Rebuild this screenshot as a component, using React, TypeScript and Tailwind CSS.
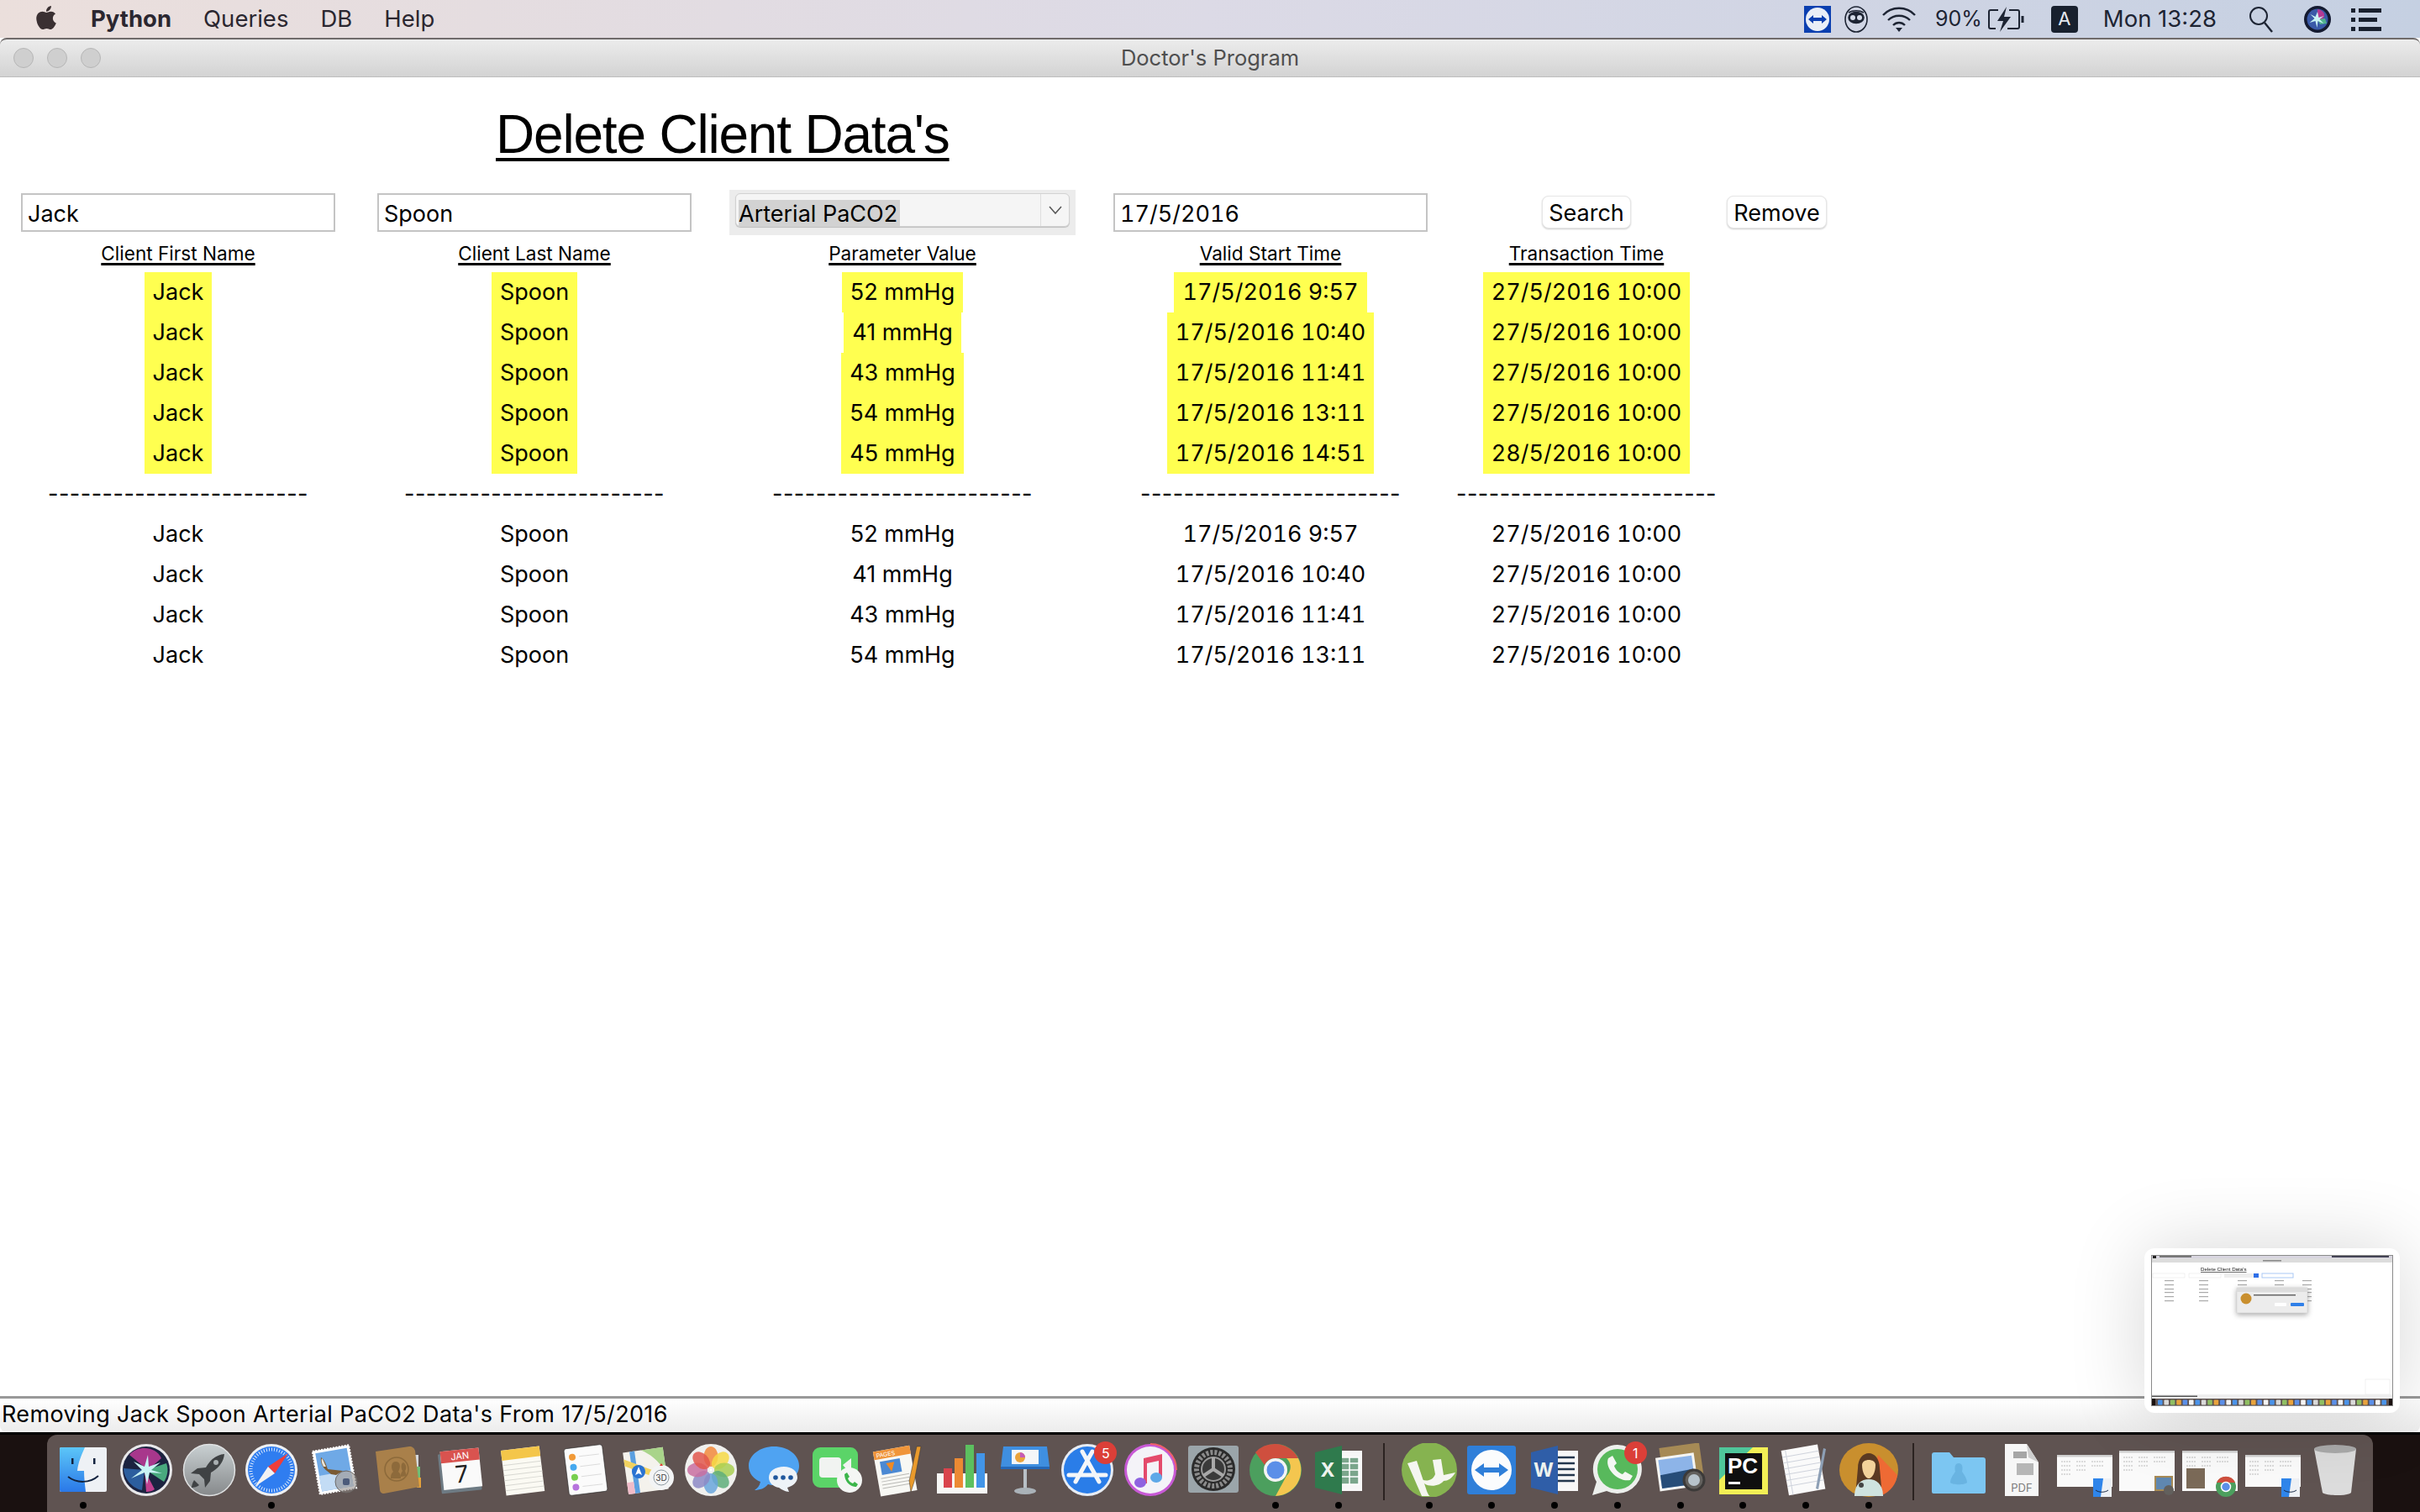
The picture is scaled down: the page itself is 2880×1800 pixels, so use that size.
import type { ReactNode } from "react";
import { FaApple } from "react-icons/fa";

const UI = "[font-family:Inter,'Noto_Sans',sans-serif]";
const ARIAL = "[font-family:'Liberation_Sans',Arial,sans-serif]";
const DATE = "tabular-nums";

const FIRST = ["Jack", "Jack", "Jack", "Jack", "Jack"];
const LAST = ["Spoon", "Spoon", "Spoon", "Spoon", "Spoon"];
const VALUES = ["52 mmHg", "41 mmHg", "43 mmHg", "54 mmHg", "45 mmHg"];
const STARTS = ["17/5/2016 9:57", "17/5/2016 10:40", "17/5/2016 11:41", "17/5/2016 13:11", "17/5/2016 14:51"];
const TX = ["27/5/2016 10:00", "27/5/2016 10:00", "27/5/2016 10:00", "27/5/2016 10:00", "28/5/2016 10:00"];

const INPUT =
  "w-full h-[46px] px-[6px] pt-[2px] text-[27px] text-black bg-white border-2 border-[#c4c4c4] outline-none";
const BUTTON =
  "h-[39px] -mt-[2px] px-[7px] text-[27px] text-black bg-white rounded-lg border border-[#e6e6e6] shadow-[0_1px_2px_rgba(0,0,0,0.2)]";

// ── Table column ──────────────────────────────────────────────────────────────

function Column({
  className,
  control,
  label,
  rows,
  date,
}: {
  className: string;
  control: ReactNode;
  label: string;
  rows: string[];
  date?: boolean;
}) {
  return (
    <div className={`flex flex-col items-center ${className}`}>
      <div className="h-[54px] w-full flex items-center justify-center">{control}</div>
      <div className="h-[44px] flex items-center text-[22.6px] underline decoration-[3px] underline-offset-[3px]">
        {label}
      </div>
      {rows.map((r, i) => (
        <div key={i} className={`h-[48px] leading-[48px] px-[10px] bg-[#ffff50] whitespace-nowrap ${date ? DATE : ""}`}>
          {r}
        </div>
      ))}
      <div className="h-[48px] leading-[48px] tracking-[0.5px] whitespace-nowrap">------------------------</div>
      {rows.slice(0, 4).map((r, i) => (
        <div key={i} className={`h-[48px] leading-[48px] whitespace-nowrap ${date ? DATE : ""}`}>
          {r}
        </div>
      ))}
    </div>
  );
}

// ── Menu bar ──────────────────────────────────────────────────────────────────

function MenuBar() {
  return (
    <div className={`h-[45px] shrink-0 flex items-center justify-between text-[27.5px] text-[#2b2730] bg-gradient-to-r from-[#ebdfdc] via-[#dcdae6] to-[#c5d0e2] ${UI}`}>
      <div className="flex items-center pl-[40px]">
        <FaApple className="w-[30px] h-[32px] text-[#3a3032] -mt-[4px]" />
        <span className="ml-[38px] font-bold">Python</span>
        <span className="ml-[38px]">Queries</span>
        <span className="ml-[38px]">DB</span>
        <span className="ml-[38px]">Help</span>
      </div>
      <div className="flex items-center pr-[46px] text-[#1d2433]">
        <svg width="32" height="32" viewBox="0 0 32 32">
          <rect width="32" height="32" fill="#0b3fb0" />
          <ellipse cx="16" cy="16" rx="14" ry="14" fill="#e9eef7" />
          <path d="M5 16l6-5v3h10v-3l6 5-6 5v-3H11v3z" fill="#0b3fb0" />
        </svg>
        <svg className="ml-[16px]" width="28" height="32" viewBox="0 0 28 32" fill="none" stroke="#1d2433" strokeWidth="1.6">
          <ellipse cx="14" cy="16" rx="13" ry="15" />
          <path d="M5 8c5-3 13-3 18 0" />
          <ellipse cx="14" cy="14" rx="9" ry="6.5" fill="#1d2433" />
          <circle cx="10" cy="14" r="3" fill="#d5dbe8" stroke="none" />
          <circle cx="18" cy="14" r="3" fill="#d5dbe8" stroke="none" />
        </svg>
        <svg className="ml-[16px]" width="42" height="32" viewBox="0 0 42 32" fill="none" stroke="#1d2433" strokeWidth="2.4">
          <path d="M2 11C12 0 30 0 40 11" />
          <path d="M8 17c7-7 19-7 26 0" />
          <path d="M14 23c4-4 10-4 14 0" />
          <path d="M17 26h8l-4 5z" fill="#1d2433" stroke="none" />
        </svg>
        <span className="ml-[22px] text-[25px]">90%</span>
        <svg className="ml-[6px]" width="46" height="32" viewBox="0 0 46 32" fill="none" stroke="#1d2433" strokeWidth="2">
          <path d="M13 5H4a2 2 0 0 0-2 2v18a2 2 0 0 0 2 2h6M26 5h10a2 2 0 0 1 2 2v18a2 2 0 0 1-2 2H24" />
          <path d="M42 12v8" strokeWidth="3" />
          <path d="M23 1L12 18h7l-4 13 13-18h-8z" fill="#1d2433" stroke="none" />
        </svg>
        <span className="ml-[30px] w-[32px] h-[32px] rounded-[4px] bg-[#18202e] text-[#e6e9f0] text-[22px] flex items-center justify-center">
          A
        </span>
        <span className="ml-[30px]">Mon 13:28</span>
        <svg className="ml-[38px]" width="30" height="32" viewBox="0 0 30 32" fill="none" stroke="#1d2433" strokeWidth="2">
          <circle cx="12" cy="12" r="10" />
          <path d="M19 20l9 11" strokeWidth="2.4" />
        </svg>
        <svg className="ml-[36px]" width="32" height="32" viewBox="0 0 32 32">
          <circle cx="16" cy="16" r="16" fill="#141a30" />
          <circle cx="16" cy="16" r="12.5" fill="#3a5aa8" />
          <path d="M16 4c7 1 11 7 6 12h-6z" fill="#b43a94" />
          <path d="M16 16l9-1 2 6-8 1z" fill="#4fb28c" />
          <path d="M16 7l1.5 7 6-2-5 4 5 5-7-3-1 8-2-8-7 2 6-5-5-5 6 3z" fill="#c9f3f4" />
        </svg>
        <svg className="ml-[24px]" width="36" height="28" viewBox="0 0 36 28" fill="#18202e">
          <rect y="1" width="5" height="5" />
          <rect x="9" y="1" width="27" height="5" />
          <rect y="12" width="5" height="5" />
          <rect x="9" y="12" width="22" height="5" />
          <rect y="23" width="5" height="5" />
          <rect x="9" y="23" width="27" height="5" />
        </svg>
      </div>
    </div>
  );
}

// ── Dock icons ────────────────────────────────────────────────────────────────

function Ico({ children, w = 64 }: { children: ReactNode; w?: number }) {
  return (
    <svg width={w} height="64" viewBox={`0 0 ${w} 64`}>
      {children}
    </svg>
  );
}

const Finder = () => (
  <Ico>
    <defs>
      <linearGradient id="fb" x1="0" y1="0" x2="0" y2="1">
        <stop offset="0" stopColor="#5cc6f8" />
        <stop offset="1" stopColor="#2a78e8" />
      </linearGradient>
    </defs>
    <rect x="4" y="5" width="56" height="53" rx="2" fill="#eef1f5" />
    <path d="M6 5h28c-4 9-8 18-9 28h8c0 8 1 16 2 25H6a2 2 0 0 1-2-2V7a2 2 0 0 1 2-2z" fill="url(#fb)" />
    <rect x="18" y="18" width="2.5" height="7" fill="#12233f" />
    <rect x="44" y="18" width="2.5" height="7" fill="#12233f" />
    <path d="M14 40c10 8 26 8 36-1" fill="none" stroke="#12233f" strokeWidth="2" />
  </Ico>
);

const Siri = () => (
  <Ico>
    <circle cx="32" cy="32" r="31" fill="#e8e8ea" />
    <circle cx="32" cy="32" r="28" fill="#1c2340" />
    <path d="M12 14C22 2 44 4 50 18L34 32z" fill="#a8378c" />
    <path d="M5 30c1 14 11 24 22 26l3-24z" fill="#2c5e9e" />
    <path d="M32 32l24-8c3 8 1 16-3 22z" fill="#49a97e" />
    <path d="M30 32l2 26c4 0 8-1 10-3z" fill="#c0408f" />
    <path d="M34 14l1 14 14-5-11 9 13 4-15-1-3 14-3-14-16 7 13-10-10-10 13 6z" fill="#c9f3f4" />
  </Ico>
);

const Launchpad = () => (
  <Ico>
    <defs>
      <linearGradient id="lp" x1="0" y1="0" x2="0" y2="1">
        <stop offset="0" stopColor="#c9d0d2" />
        <stop offset="1" stopColor="#86898b" />
      </linearGradient>
    </defs>
    <circle cx="32" cy="32" r="30.5" fill="url(#lp)" stroke="#dfe1e2" strokeWidth="1.5" />
    <path d="M50 13c-10 1-17 7-22 16l-10 1-8 6 10 1 6 6 1 10 6-8 1-10c9-5 15-12 16-22z" fill="#3f4244" />
    <circle cx="40" cy="23" r="3" fill="#a9afb1" />
    <path d="M14 44c-2 3-3 7-3 9 3 0 7-1 9-3z" fill="#3f4244" />
  </Ico>
);

const Safari = () => (
  <Ico>
    <circle cx="32" cy="32" r="31" fill="#eef0f2" />
    <circle cx="32" cy="32" r="28" fill="#2f7df0" />
    <circle cx="32" cy="32" r="24.5" fill="none" stroke="#dbe9fb" strokeWidth="4" strokeDasharray="1 2.1" />
    <path d="M52 12L36 36l-8-8z" fill="#ef3e3a" />
    <path d="M12 52l16-24 8 8z" fill="#f2f2f2" />
  </Ico>
);

const Mail = () => (
  <Ico>
    <g transform="rotate(-10 30 32)">
      <rect x="10" y="6" width="44" height="52" fill="#fff" stroke="#fff" strokeWidth="2" strokeDasharray="2 1.5" />
      <rect x="13" y="9" width="38" height="46" fill="#6fa9e6" />
      <rect x="13" y="36" width="38" height="19" fill="#c3dcf5" />
    </g>
    <path d="M16 17c4 2 6 8 8 14l18 2-8 5-6-1-5-4c-5-4-8-10-7-16z" fill="#7a5a33" />
    <path d="M17 18c2 2 3 6 5 10l-3 0c-2-3-3-7-2-10z" fill="#e9e3d6" />
    <circle cx="46" cy="46" r="13" fill="#8a8582" fillOpacity="0.55" stroke="#6e6a68" />
    <rect x="42" y="42" width="8" height="8" rx="2" fill="#4c5b7a" />
  </Ico>
);

const Contacts = () => (
  <Ico>
    <rect x="52" y="14" width="5" height="14" fill="#d4d8dc" />
    <rect x="54" y="28" width="5" height="13" fill="#6fbf76" />
    <rect x="55" y="41" width="5" height="12" fill="#e4a23b" />
    <path d="M6 10L46 4c4 0 6 2 7 5l5 43-42 8c-3 0-5-2-5-5z" fill="#a9804a" />
    <circle cx="31" cy="31" r="14" fill="none" stroke="#8d6a3b" strokeWidth="1.6" />
    <path d="M24 42c0-5 1-6 3-8-3-4-3-12 3-12s6 7 3 12c2 2 3 3 3 8z" fill="#8d6a3b" />
    <path d="M36 40c0-5 1-5 2-7-2-3-2-9 1-10 4 2 4 8 2 10l2 6z" fill="#8d6a3b" />
  </Ico>
);

const Calendar = () => (
  <Ico>
    <g transform="rotate(-6 32 32)">
      <rect x="8" y="11" width="48" height="47" rx="1" fill="#6e7b84" />
      <rect x="11" y="8" width="46" height="46" fill="#fafafa" />
      <rect x="11" y="8" width="46" height="14" fill="#d9534f" />
      <text x="34" y="19.5" textAnchor="middle" fontSize="11" fill="#fff" fontFamily="Inter">JAN</text>
      <text x="34" y="47" textAnchor="middle" fontSize="28" fill="#222" fontFamily="Inter">7</text>
    </g>
  </Ico>
);

const Notes = () => (
  <Ico>
    <g transform="rotate(-7 32 32)">
      <rect x="9" y="6" width="46" height="54" fill="#fbfaf3" />
      <rect x="9" y="6" width="46" height="12" fill="#f4c64a" />
      <path d="M9 24h46M9 30h46M9 36h46M9 42h46M9 48h46M9 54h46" stroke="#d8d8d2" />
    </g>
  </Ico>
);

const Reminders = () => (
  <Ico>
    <g transform="rotate(-7 32 32)">
      <rect x="9" y="4" width="46" height="56" rx="3" fill="#fbfbfb" stroke="#262626" strokeWidth="0.6" />
      <circle cx="18" cy="15" r="4" fill="#f19a38" />
      <circle cx="18" cy="27" r="4" fill="#46a9ef" />
      <circle cx="18" cy="39" r="4" fill="#77cf4f" />
      <circle cx="18" cy="51" r="4" fill="#b673dd" />
      <path d="M26 15h24M26 27h24M26 39h24M26 51h24" stroke="#dcdcdc" />
    </g>
  </Ico>
);

const Maps = () => (
  <Ico>
    <g transform="rotate(-8 28 30)">
      <rect x="4" y="8" width="48" height="50" fill="#f4f2ec" />
      <path d="M26 8h26v30C44 22 36 14 26 8z" fill="#a9d48a" />
      <path d="M12 8h6v50h-6z" fill="#5b9fe0" />
      <path d="M4 24l48 26v-8L4 16z" fill="#f2d25f" />
      <rect x="4" y="44" width="8" height="14" fill="#f1bcc9" />
    </g>
    <circle cx="20" cy="34" r="8" fill="#2a73d2" />
    <path d="M20 28l4 10-4-2-4 2z" fill="#fff" />
    <circle cx="47" cy="41" r="15" fill="#f3f4f5" />
    <circle cx="47" cy="41" r="9" fill="none" stroke="#8e9aa2" />
    <text x="47" y="45" textAnchor="middle" fontSize="10" fill="#444" fontFamily="Inter">3D</text>
    <path d="M47 24l2 3h-4z" fill="#e23b32" />
  </Ico>
);

const PETALS = ["#f28a3c", "#f6d945", "#a9cf52", "#5fae7a", "#6aa6dc", "#8d8ac6", "#c96fa0", "#e2574c"];

const Photos = () => (
  <Ico>
    <circle cx="32" cy="32" r="31" fill="#f0f0ee" />
    {PETALS.map((c, i) => (
      <ellipse key={c} cx="32" cy="16" rx="8.5" ry="12" fill={c} fillOpacity="0.85" transform={`rotate(${i * 45} 32 32)`} />
    ))}
    <circle cx="32" cy="32" r="1.5" fill="#fff" />
  </Ico>
);

const Messages = () => (
  <Ico>
    <path d="M32 4C16 4 2 14 2 27c0 9 6 16 14 19-1 5-4 8-7 10 6 0 12-2 16-7 3 1 5 1 7 1 17 0 30-10 30-23S49 4 32 4z" fill="#4fa3f2" />
    <path d="M44 28c-10 0-18 5-18 13 0 6 5 11 12 12 3 2 8 5 12 5l-2-5c7-2 12-7 12-12 0-8-7-13-16-13z" fill="#eef3f8" />
    <circle cx="34" cy="41" r="2.8" fill="#1f579d" />
    <circle cx="43" cy="41" r="2.8" fill="#1f579d" />
    <circle cx="52" cy="41" r="2.8" fill="#1f579d" />
  </Ico>
);

const FaceTime = () => (
  <Ico>
    <rect x="3" y="5" width="54" height="48" rx="9" fill="#5bd468" />
    <rect x="11" y="17" width="26" height="24" rx="4" fill="#f1f3f1" />
    <path d="M39 26l10-8v20z" fill="#f1f3f1" />
    <circle cx="47" cy="44" r="15" fill="#f4f6f4" />
    <path d="M41 37l3-2 3 5-2 2c1 3 3 5 6 6l2-2 4 3-2 3c-8 0-14-7-14-15z" fill="#3cb64b" />
  </Ico>
);

const Pages = () => (
  <Ico>
    <g transform="rotate(-10 28 32)">
      <rect x="5" y="6" width="44" height="54" fill="#f8f8f4" />
      <rect x="5" y="6" width="44" height="10" fill="#f0953a" />
      <text x="8" y="14" fontSize="7" fill="#fff" fontFamily="Inter">PAGES</text>
      <rect x="11" y="19" width="24" height="16" fill="#4b89d3" />
      <path d="M18 22h10l-5 11z" fill="#f08a24" />
      <path d="M9 39h34M9 43h34M9 47h34M9 51h34" stroke="#b9b9b5" />
    </g>
    <path d="M58 4l-8 42-4 12-2-13 9-41z" fill="#e99a2c" stroke="#333" strokeWidth="0.5" />
  </Ico>
);

const Numbers = () => (
  <Ico>
    <rect x="2" y="36" width="60" height="24" fill="#f7f7f5" />
    <rect x="10" y="30" width="10" height="23" fill="#d9434c" />
    <rect x="23" y="18" width="10" height="35" fill="#ec8a33" />
    <rect x="36" y="2" width="10" height="51" fill="#5cc05f" />
    <rect x="49" y="12" width="10" height="41" fill="#4295e8" />
  </Ico>
);

const Keynote = () => (
  <Ico>
    <path d="M6 4h52l3 24H3z" fill="#3f8fe0" />
    <rect x="16" y="8" width="32" height="17" fill="#f4f6f8" />
    <circle cx="26" cy="17" r="6" fill="#e9a33c" />
    <path d="M26 17V11a6 6 0 0 1 6 6z" fill="#c65bb8" />
    <rect x="3" y="28" width="58" height="3" fill="#2568b8" />
    <rect x="30" y="31" width="4" height="24" fill="#b8c0c6" />
    <ellipse cx="32" cy="57" rx="13" ry="4" fill="#aab2b8" />
  </Ico>
);

const AppStore = () => (
  <Ico>
    <circle cx="32" cy="32" r="31" fill="#e7ecf3" />
    <circle cx="32" cy="32" r="28" fill="#2a7de8" />
    <path d="M38 10L18 46M26 10l20 36M10 38h44" stroke="#f4f6f9" strokeWidth="5" strokeLinecap="round" />
  </Ico>
);

const Music = () => (
  <Ico>
    <circle cx="32" cy="32" r="31" fill="#c85ad6" />
    <path d="M32 1a31 31 0 0 1 31 31" fill="none" stroke="#ef5f6a" strokeWidth="2" />
    <circle cx="32" cy="32" r="28" fill="#f4f3f8" />
    <path d="M24 18l22-5v28h-4V21l-14 3v24h-4z" fill="#e44a6b" />
    <ellipse cx="20" cy="47" rx="7" ry="6" fill="#8f63e0" />
    <ellipse cx="39" cy="41" rx="7" ry="6" fill="#5ea8e8" />
  </Ico>
);

const SysPrefs = () => (
  <Ico>
    <rect x="2" y="3" width="60" height="56" rx="3" fill="#9ba5aa" />
    <circle cx="32" cy="31" r="26" fill="#2b2b2b" />
    <circle cx="32" cy="31" r="20" fill="none" stroke="#8b8b8b" strokeWidth="6" strokeDasharray="3 2" />
    <circle cx="32" cy="31" r="14" fill="#3a3a3a" stroke="#999" strokeWidth="2" />
    <path d="M32 31V17M32 31L20 39M32 31l12 8" stroke="#a8a8a8" strokeWidth="4" />
  </Ico>
);

const Chrome = () => (
  <Ico>
    <circle cx="32" cy="32" r="31" fill="#4c9f5e" />
    <path d="M32 1a31 31 0 0 1 27 17H32a14 14 0 0 0-13 8L8 11A31 31 0 0 1 32 1z" fill="#cf4f3e" />
    <path d="M59 18a31 31 0 0 1-27 45l13-24a14 14 0 0 0 0-21z" fill="#f4c64f" />
    <circle cx="32" cy="32" r="14" fill="#f4f4f4" />
    <circle cx="32" cy="32" r="10.5" fill="#5b8fe8" />
  </Ico>
);

const Office = ({ color, letter, word }: { color: string; letter: string; word?: boolean }) => (
  <Ico>
    <rect x="24" y="9" width="36" height="48" fill="#f7f7f7" />
    {word ? (
      <path d="M34 17h22M34 24h22M34 31h22M34 38h22M34 45h22" stroke="#23364d" strokeWidth="2.5" />
    ) : (
      <path d="M34 17h22v32H34zM34 24h22M34 32h22M34 40h22M45 17v32" fill="#7ba68c" stroke="#fff" strokeWidth="1.5" />
    )}
    <path d="M4 11L36 3v58L4 53z" fill={color} />
    <text x="19" y="40" textAnchor="middle" fontSize="23" fontWeight="700" fill="#eef3ee" fontFamily="Inter">{letter}</text>
  </Ico>
);

const UTorrent = () => (
  <Ico w={68}>
    <circle cx="34" cy="32" r="33" fill="#86b350" />
    <path d="M8 24l11-3 11 33c1 3 3 9 5 9h-10L8 24z" fill="#f5f6f1" />
    <path d="M22 40c4 7 16 6 19-3l-3-17 10-1 3 19 14-3c-4 7-9 10-14 10-5 7-24 10-29-5z" fill="#f5f6f1" />
  </Ico>
);

const TeamViewer = () => (
  <Ico>
    <rect x="3" y="3" width="58" height="58" rx="3" fill="#2f7fd9" />
    <circle cx="32" cy="32" r="24" fill="#fbfcfd" />
    <path d="M12 32l11-8v5h18v-5l11 8-11 8v-5H23v5z" fill="#2f7fd9" />
  </Ico>
);

const WhatsApp = () => (
  <Ico>
    <path d="M32 2a29 29 0 0 0-25 44L2 62l17-5A29 29 0 1 0 32 2z" fill="#ecefec" />
    <circle cx="32" cy="31" r="24" fill="#58b95c" />
    <path d="M21 18l5-3 5 9-3 3c1 4 6 9 10 10l3-3 9 5-3 5c-14 3-31-14-26-26z" fill="#f4f7f3" />
  </Ico>
);

const Preview = () => (
  <Ico>
    <g transform="rotate(-8 30 30)">
      <rect x="10" y="3" width="48" height="44" fill="#a68a55" />
      <rect x="4" y="14" width="46" height="40" fill="#f5f5f2" />
      <rect x="7" y="17" width="40" height="34" fill="#8db4e8" />
      <path d="M7 35l40-2v18H7z" fill="#274d78" />
    </g>
    <circle cx="48" cy="44" r="12" fill="#62605d" stroke="#3c3a39" strokeWidth="3" />
    <circle cx="48" cy="44" r="7" fill="#b7c3cb" />
  </Ico>
);

const PyCharm = () => (
  <Ico>
    <rect x="4" y="5" width="58" height="56" fill="#f2ef55" />
    <path d="M4 5h40L20 28 4 44z" fill="#4fc69a" />
    <rect x="11" y="12" width="44" height="43" fill="#0f0f0f" />
    <text x="14" y="36" fontSize="26" fontWeight="700" fill="#fff" fontFamily="'Liberation Sans'">PC</text>
    <rect x="15" y="46" width="14" height="3" fill="#fff" />
  </Ico>
);

const TextEdit = () => (
  <Ico>
    <g transform="rotate(-10 28 32)">
      <rect x="7" y="5" width="44" height="54" fill="#fafafa" />
      <path d="M7 13h44M7 20h44M7 27h44M7 34h44M7 41h44M7 48h44M12 5v54" stroke="#cfd3dc" />
    </g>
    <path d="M53 6l-9 48 3 1 9-48z" fill="#8d9fb5" />
  </Ico>
);

const Doctor = () => (
  <Ico w={70}>
    <ellipse cx="35" cy="32" rx="35" ry="32" fill="#c98f2e" />
    <path d="M46 14l23 24a35 32 0 0 1-18 24H36z" fill="#ee6a34" />
    <path d="M22 30c0-24 26-24 26 0l2 22H20z" fill="#5b3a22" />
    <path d="M27 26c0-8 16-8 16 0 0 9-4 16-8 16s-8-7-8-16z" fill="#f4d39b" />
    <path d="M18 63c0-14 8-20 17-20s17 6 17 20z" fill="#cfe3df" />
    <circle cx="26" cy="50" r="3" fill="#444" />
  </Ico>
);

const Folder = () => (
  <Ico w={66}>
    <path d="M1 14a3 3 0 0 1 3-3h18l5 6h35a3 3 0 0 1 3 3v38a2 2 0 0 1-2 2H3a2 2 0 0 1-2-2z" fill="#7cc6f2" />
    <path d="M33 24c-5 0-5 6-4 10-3 4-6 9-6 13 3 3 17 3 20 0 0-4-3-9-6-13 1-4 1-10-4-10z" fill="#69b4e2" />
  </Ico>
);

const Pdf = () => (
  <Ico>
    <path d="M12 1h26l14 22v40H12z" fill="#f6f6f6" />
    <path d="M38 1l14 22-12-6z" fill="#cfcfcf" />
    <rect x="22" y="10" width="16" height="8" fill="#a6a6a6" />
    <rect x="26" y="24" width="20" height="14" fill="#b6b6b6" />
    <text x="32" y="58" textAnchor="middle" fontSize="13" fill="#7b7b7b" fontFamily="Inter">PDF</text>
  </Ico>
);

const Thumb = ({ kind }: { kind: "finder" | "doc" | "chrome" }) => {
  const top = kind === "finder" ? 14 : 9;
  const h = kind === "finder" ? 38 : 48;
  return (
    <Ico w={68}>
      <rect x="1" y={top} width="66" height={h} fill="#fafafa" />
      <rect x="1" y={top} width="66" height="2.5" fill="#cfcfcf" />
      <path
        d={`M6 ${top + 8}h12M6 ${top + 13}h12M6 ${top + 18}h12M6 ${top + 23}h12M24 ${top + 8}h12M24 ${top + 13}h12M24 ${top + 18}h12M42 ${top + 8}h14M42 ${top + 13}h14`}
        stroke="#bcbcbc"
        strokeDasharray="2 1"
      />
      {kind === "chrome" && (
        <>
          <rect x="6" y="30" width="22" height="24" fill="#7b6a58" />
          <circle cx="53" cy="52" r="12" fill="#4c9f5e" />
          <path d="M42 47a12 12 0 0 1 22 0z" fill="#cf4f3e" />
          <circle cx="53" cy="52" r="5.5" fill="#5b8fe8" stroke="#fff" strokeWidth="1.5" />
        </>
      )}
      {kind === "finder" && (
        <>
          <rect x="44" y="42" width="22" height="22" fill="#eef1f5" />
          <path d="M44 42h12l-3 22h-9z" fill="#2f85ea" />
          <path d="M47 56c4 3 11 3 15 0" fill="none" stroke="#12233f" />
        </>
      )}
      {kind === "doc" && (
        <>
          <rect x="44" y="40" width="20" height="16" fill="#5f87b0" stroke="#a68a55" strokeWidth="2" />
          <circle cx="60" cy="56" r="6" fill="#62605d" />
        </>
      )}
    </Ico>
  );
};

const Trash = () => (
  <Ico>
    <path d="M7 7c8-5 42-5 50 0l-6 52c-4 4-30 4-34 0z" fill="#dcdcdc" />
    <ellipse cx="32" cy="7" rx="25" ry="5" fill="#a9a9a9" />
  </Ico>
);

const Badge = ({ n }: { n: number }) => (
  <span className="absolute -top-[2px] right-[-3px] w-[27px] h-[27px] rounded-full bg-[#db3f38] text-white text-[16px] flex items-center justify-center">
    {n}
  </span>
);

function Slot({ children, dot, badge }: { children: ReactNode; dot?: boolean; badge?: number }) {
  return (
    <div className="relative w-[74.7px] shrink-0 flex flex-col items-center">
      <div className="relative h-[64px] flex items-center justify-center">
        {children}
        {badge !== undefined && <Badge n={badge} />}
      </div>
      {dot && <div className="mt-[6px] w-[8px] h-[8px] rounded-full bg-black" />}
    </div>
  );
}

const Sep = () => (
  <div className="w-[33px] shrink-0 flex justify-center">
    <div className="w-[2px] h-[68px] bg-[#2b2220]" />
  </div>
);

function Dock() {
  return (
    <div className={`h-[95px] shrink-0 border-t-[3px] border-black bg-[#1a1110] pl-[56px] pr-[56px] ${UI}`}>
      <div className="h-full rounded-t-xl bg-[#5f5351] flex pt-[10px] pl-[6px]">
        <Slot dot><Finder /></Slot>
        <Slot><Siri /></Slot>
        <Slot><Launchpad /></Slot>
        <Slot dot><Safari /></Slot>
        <Slot><Mail /></Slot>
        <Slot><Contacts /></Slot>
        <Slot><Calendar /></Slot>
        <Slot><Notes /></Slot>
        <Slot><Reminders /></Slot>
        <Slot><Maps /></Slot>
        <Slot><Photos /></Slot>
        <Slot><Messages /></Slot>
        <Slot><FaceTime /></Slot>
        <Slot><Pages /></Slot>
        <Slot><Numbers /></Slot>
        <Slot><Keynote /></Slot>
        <Slot badge={5}><AppStore /></Slot>
        <Slot><Music /></Slot>
        <Slot><SysPrefs /></Slot>
        <Slot dot><Chrome /></Slot>
        <Slot dot><Office color="#2f7a4d" letter="X" /></Slot>
        <Sep />
        <Slot dot><UTorrent /></Slot>
        <Slot dot><TeamViewer /></Slot>
        <Slot dot><Office color="#2f5ea8" letter="W" word /></Slot>
        <Slot dot badge={1}><WhatsApp /></Slot>
        <Slot dot><Preview /></Slot>
        <Slot dot><PyCharm /></Slot>
        <Slot dot><TextEdit /></Slot>
        <Slot dot><Doctor /></Slot>
        <Sep />
        <Slot><Folder /></Slot>
        <Slot><Pdf /></Slot>
        <Slot><Thumb kind="finder" /></Slot>
        <Slot><Thumb kind="doc" /></Slot>
        <Slot><Thumb kind="chrome" /></Slot>
        <Slot><Thumb kind="finder" /></Slot>
        <Slot><Trash /></Slot>
      </div>
    </div>
  );
}

// ── Screenshot preview in the corner ─────────────────────────────────────────

function Preview288() {
  const cols = [21, 62, 108, 152, 185];
  const rows = [30, 35, 40, 44, 49, 54];
  return (
    <svg width="288" height="180" viewBox="0 0 288 180" className="block blur-[0.3px]">
      <rect width="288" height="180" fill="#fff" />
      <rect width="288" height="4" fill="#d9d6e0" />
      <rect y="4" width="288" height="5" fill="#dcdcdc" />
      <rect x="2" y="1" width="4" height="3" fill="#222" />
      <rect x="10" y="1" width="38" height="2" fill="#777" />
      <rect x="215" y="1" width="68" height="2" fill="#445" />
      <rect x="133" y="6" width="22" height="1.5" fill="#888" />
      <text x="59" y="19" fontSize="6.2" fill="#111" fontFamily="'Liberation Sans'" textDecoration="underline">
        Delete Client Data's
      </text>
      <rect x="2" y="22" width="38" height="5" fill="none" stroke="#e2e2e2" strokeWidth="0.5" />
      <rect x="45" y="22" width="38" height="5" fill="none" stroke="#e2e2e2" strokeWidth="0.5" />
      <rect x="87" y="22" width="41" height="5" fill="#eee" />
      <rect x="122" y="22" width="6" height="5" fill="#2f6fe8" />
      <rect x="132" y="22" width="37" height="5" fill="none" stroke="#a9c8f5" />
      {cols.map((x) =>
        rows.map((y) => (
          <rect key={`${x}-${y}`} x={x - 5} y={y} width="11" height="1.2" fill="#aaa" />
        )),
      )}
      <rect x="102" y="39" width="84" height="30" fill="#ececec" stroke="#cfcfcf" strokeWidth="0.5" filter="drop-shadow(0 2px 3px rgba(0,0,0,0.35))" />
      <rect x="102" y="39" width="84" height="5" fill="#dcdcdc" />
      <circle cx="113" cy="52" r="6.5" fill="#c98f2e" />
      <rect x="122" y="47" width="50" height="1.5" fill="#666" />
      <rect x="147" y="57" width="14" height="4" rx="1" fill="#fff" />
      <rect x="166" y="57" width="16" height="4" rx="1" fill="#2f7fe8" />
      <rect x="255" y="148" width="29" height="18" fill="#fff" stroke="#e2e2e2" strokeWidth="0.5" />
      <rect y="166" width="288" height="5" fill="#eee" />
      <rect x="1" y="167.5" width="54" height="1.5" fill="#555" />
      <rect y="171" width="288" height="9" fill="#1a1110" />
      <rect x="5" y="171" width="278" height="9" fill="#5f5351" />
      {Array.from({ length: 37 }, (_, i) => (
        <rect
          key={i}
          x={8 + i * 7.4}
          y="172.5"
          width="5.6"
          height="6"
          rx="1"
          fill={["#4a93ea", "#d9d9d9", "#8fbf62", "#e9a33c", "#5b8fe8", "#f4f4f4"][i % 6]}
        />
      ))}
      <rect x="0.5" y="0.5" width="287" height="179" fill="none" stroke="#8a8a8a" />
    </svg>
  );
}

export default function App() {
  return (
    <div className="relative w-[2880px] h-[1800px] overflow-hidden flex flex-col bg-white text-black">
      <MenuBar />

      {/* Window */}
      <div className={`flex-1 min-h-0 flex flex-col ${UI}`}>
        <div className="relative h-[47px] shrink-0 rounded-t-lg border-t-2 border-b border-t-[#6f6a6a] border-b-[#bdbdbd] bg-gradient-to-b from-[#ececec] to-[#d3d3d3] flex items-center justify-center text-[25.5px] text-[#4f4f4f]">
          <div className="absolute left-[16px] flex gap-[16px]">
            <span className="w-[24px] h-[24px] rounded-full bg-[#cfcfcf] border border-[#b6b6b6]" />
            <span className="w-[24px] h-[24px] rounded-full bg-[#cfcfcf] border border-[#b6b6b6]" />
            <span className="w-[24px] h-[24px] rounded-full bg-[#cfcfcf] border border-[#b6b6b6]" />
          </div>
          Doctor's Program
        </div>

        <div className="flex-1 min-h-0 flex flex-col pl-[25px]">
          <div className="h-[134px] shrink-0 pl-[565px] pt-[32px]">
            <h1 className={`text-[64px] leading-[72px] tracking-[-1.2px] underline decoration-[4px] underline-offset-[6px] ${ARIAL}`}>
              Delete Client Data's
            </h1>
          </div>

          <div className="flex text-[27px]">
            <Column
              className="w-[374px]"
              label="Client First Name"
              rows={FIRST}
              control={<input readOnly defaultValue="Jack" className={INPUT} />}
            />
            <Column
              className="w-[374px] ml-[50px]"
              label="Client Last Name"
              rows={LAST}
              control={<input readOnly defaultValue="Spoon" className={INPUT} />}
            />
            <Column
              className="w-[412px] ml-[45px]"
              label="Parameter Value"
              rows={VALUES}
              control={
                <div className="w-full h-[54px] bg-[#ececec] px-[7px] py-[4px]">
                  <div className="h-[40px] rounded-md border border-[#d2d2d2] bg-[#f5f5f5] shadow-[0_1px_1px_rgba(0,0,0,0.2)] flex items-end justify-between">
                    <span className="h-[31px] w-[192px] ml-[3px] leading-[33px] bg-[#d2d2d2]">Arterial PaCO2</span>
                    <span className="w-[34px] h-full border-l border-[#dedede] flex items-center justify-center">
                      <svg width="16" height="10" viewBox="0 0 16 10" fill="none" stroke="#555" strokeWidth="1.5">
                        <path d="M1 1l7 8 7-8" />
                      </svg>
                    </span>
                  </div>
                </div>
              }
            />
            <Column
              className="w-[374px] ml-[45px]"
              label="Valid Start Time"
              rows={STARTS}
              date
              control={<input readOnly defaultValue="17/5/2016" className={`${INPUT} ${DATE}`} />}
            />
            <Column
              className="w-[288px] ml-[45px]"
              label="Transaction Time"
              rows={TX}
              date
              control={<button type="button" className={BUTTON}>Search</button>}
            />
            <div className="w-[111px] ml-[27px] h-[54px] flex items-center justify-center">
              <button type="button" className={BUTTON}>Remove</button>
            </div>
          </div>
        </div>

        <div className="h-[43px] shrink-0 rounded-b-lg border-t-[3px] border-[#999999] bg-gradient-to-b from-white to-[#ececec] flex items-center pl-[2px] pb-[2px] text-[27px] tracking-[0.35px]">
          Removing Jack Spoon Arterial PaCO2 Data's From 17/5/2016
        </div>
      </div>

      <Dock />

      {/* Floating screenshot preview */}
      <div className="absolute left-[2552px] top-[1486px] p-[8px] rounded-xl bg-white shadow-[0_0_90px_rgba(0,0,0,0.16)]">
        <Preview288 />
      </div>
    </div>
  );
}
